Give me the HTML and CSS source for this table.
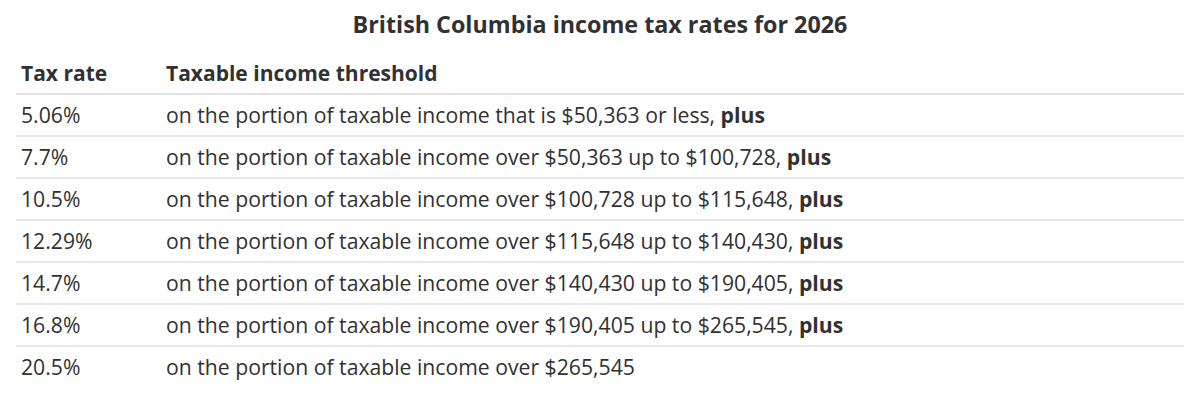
FILE: index.html
```html
<!DOCTYPE html>
<html lang="en">
<head>
<meta charset="utf-8">
<title>British Columbia income tax rates for 2026</title>
<link rel="stylesheet" href="styles.css">
</head>
<body>
<div class="wrap">
  <table class="rates">
    <caption class="title">British Columbia income tax rates for 2026</caption>
    <thead>
      <tr><th class="col-rate">Tax rate</th><th>Taxable income threshold</th></tr>
    </thead>
    <tbody>
      <tr><td>5.06%</td><td>on the portion of taxable income that is $50,363 or less, <strong>plus</strong></td></tr>
      <tr><td>7.7%</td><td>on the portion of taxable income over $50,363 up to $100,728, <strong>plus</strong></td></tr>
      <tr><td>10.5%</td><td>on the portion of taxable income over $100,728 up to $115,648, <strong>plus</strong></td></tr>
      <tr><td>12.29%</td><td>on the portion of taxable income over $115,648 up to $140,430, <strong>plus</strong></td></tr>
      <tr><td>14.7%</td><td>on the portion of taxable income over $140,430 up to $190,405, <strong>plus</strong></td></tr>
      <tr><td>16.8%</td><td>on the portion of taxable income over $190,405 up to $265,545, <strong>plus</strong></td></tr>
      <tr><td>20.5%</td><td>on the portion of taxable income over $265,545</td></tr>
    </tbody>
  </table>
</div>
</body>
</html>
```
FILE: styles.css
```css
html, body {
  margin: 0;
  padding: 0;
  background: #ffffff;
}
body {
  font-family: "Open Sans", "Noto Sans", sans-serif;
  color: #313132;
  font-size: 21.2px;
}
.wrap {
  padding: 0 16px;
}
.rates {
  width: 100%;
  border-collapse: collapse;
}
.title {
  font-size: 23.3px;
  font-weight: 700;
  line-height: 30px;
  padding: 9px 0 14px;
  text-align: center;
}
.rates th,
.rates td {
  text-align: left;
  vertical-align: middle;
  padding: 7px 5px;
  line-height: 26px;
}
.rates th {
  font-size: 21px;
  font-weight: 700;
  border-bottom: 2px solid #e2e2e2;
}
.rates .col-rate {
  width: 135px;
}
.rates tbody tr + tr td {
  border-top: 2px solid #e8e8e8;
}
.rates strong {
  font-weight: 700;
}
```
